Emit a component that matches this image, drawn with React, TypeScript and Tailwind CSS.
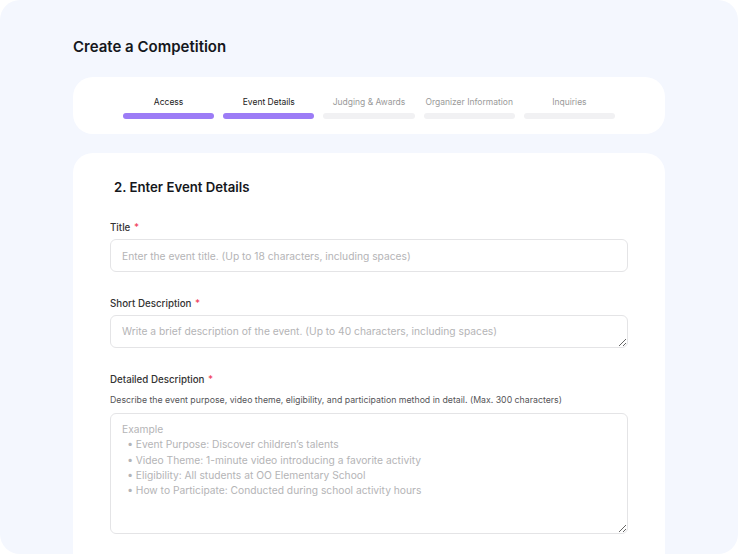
import React from "react";

const steps = [
  { label: "Access", active: true },
  { label: "Event Details", active: true },
  { label: "Judging & Awards", active: false },
  { label: "Organizer Information", active: false },
  { label: "Inquiries", active: false },
];

function Label({ text }: { text: string }) {
  return (
    <div className="pt-[1px] text-[9.75px] leading-[12px] font-medium text-[#333333]">
      {text} <span className="text-[#f0405a] ml-[1px]">*</span>
    </div>
  );
}

export default function App() {
  return (
    <div className="bg-white w-[738px] h-[554px]">
      <div
        className="w-[738px] h-[554px] bg-[#f4f7fe] rounded-[20px] overflow-hidden px-[73px] pt-[38px]"
        style={{ fontFamily: "Inter, 'Noto Sans', sans-serif" }}
      >
        <h1 className="text-[15px] leading-[18px] font-semibold text-[#15171c]">Create a Competition</h1>

        <div className="mt-[21px] h-[57px] bg-white rounded-[20px] px-[50px] pt-[20px]">
          <div className="grid grid-cols-5 gap-[9px]">
            {steps.map((s) => (
              <div key={s.label} className="flex flex-col items-center">
                <div
                  className={
                    s.active
                      ? "whitespace-nowrap text-[8.5px] leading-[11px] text-[#222222]"
                      : "whitespace-nowrap text-[8.5px] leading-[11px] text-[#9a9a9a]"
                  }
                >
                  {s.label}
                </div>
                <div
                  className={
                    s.active
                      ? "mt-[4.5px] h-[6px] w-full rounded-full bg-[#9c7cf6]"
                      : "mt-[4.5px] h-[6px] w-full rounded-full bg-[#f1f1f3]"
                  }
                />
              </div>
            ))}
          </div>
        </div>

        <div className="mt-[19px] bg-white rounded-t-[20px] px-[37px] pt-[26px] h-[500px]">
          <h2 className="ml-[4px] text-[13.2px] leading-[16px] font-semibold text-[#15171c]">2. Enter Event Details</h2>

          <div className="mt-[26px]">
            <Label text="Title" />
            <input
              className="mt-[5px] w-full h-[33px] border border-[#e4e4e6] rounded-[6px] px-[11px] text-[10.25px] text-[#333] placeholder:text-[#b4b4b6] outline-none"
              placeholder="Enter the event title. (Up to 18 characters, including spaces)"
            />
          </div>

          <div className="mt-[25px]">
            <Label text="Short Description" />
            <textarea
              className="block mt-[5px] w-full h-[33px] border border-[#e4e4e6] rounded-[6px] px-[11px] py-[8px] text-[10.25px] leading-[15px] text-[#333] placeholder:text-[#b4b4b6] outline-none"
              placeholder="Write a brief description of the event. (Up to 40 characters, including spaces)"
            />
          </div>

          <div className="mt-[25px]">
            <Label text="Detailed Description" />
            <div className="mt-[8.5px] text-[8.75px] leading-[11px] text-[#555558]">
              Describe the event purpose, video theme, eligibility, and participation method in detail. (Max. 300 characters)
            </div>
            <textarea
              className="block mt-[7.5px] w-full h-[121px] border border-[#e4e4e6] rounded-[6px] px-[11px] py-[8px] text-[10.25px] leading-[15.3px] text-[#333] placeholder:text-[#b4b4b6] outline-none"
              placeholder={
                "Example\n\u2002• Event Purpose: Discover children’s talents\n\u2002• Video Theme: 1-minute video introducing a favorite activity\n\u2002• Eligibility: All students at OO Elementary School\n\u2002• How to Participate: Conducted during school activity hours"
              }
            />
          </div>
        </div>
      </div>
    </div>
  );
}
